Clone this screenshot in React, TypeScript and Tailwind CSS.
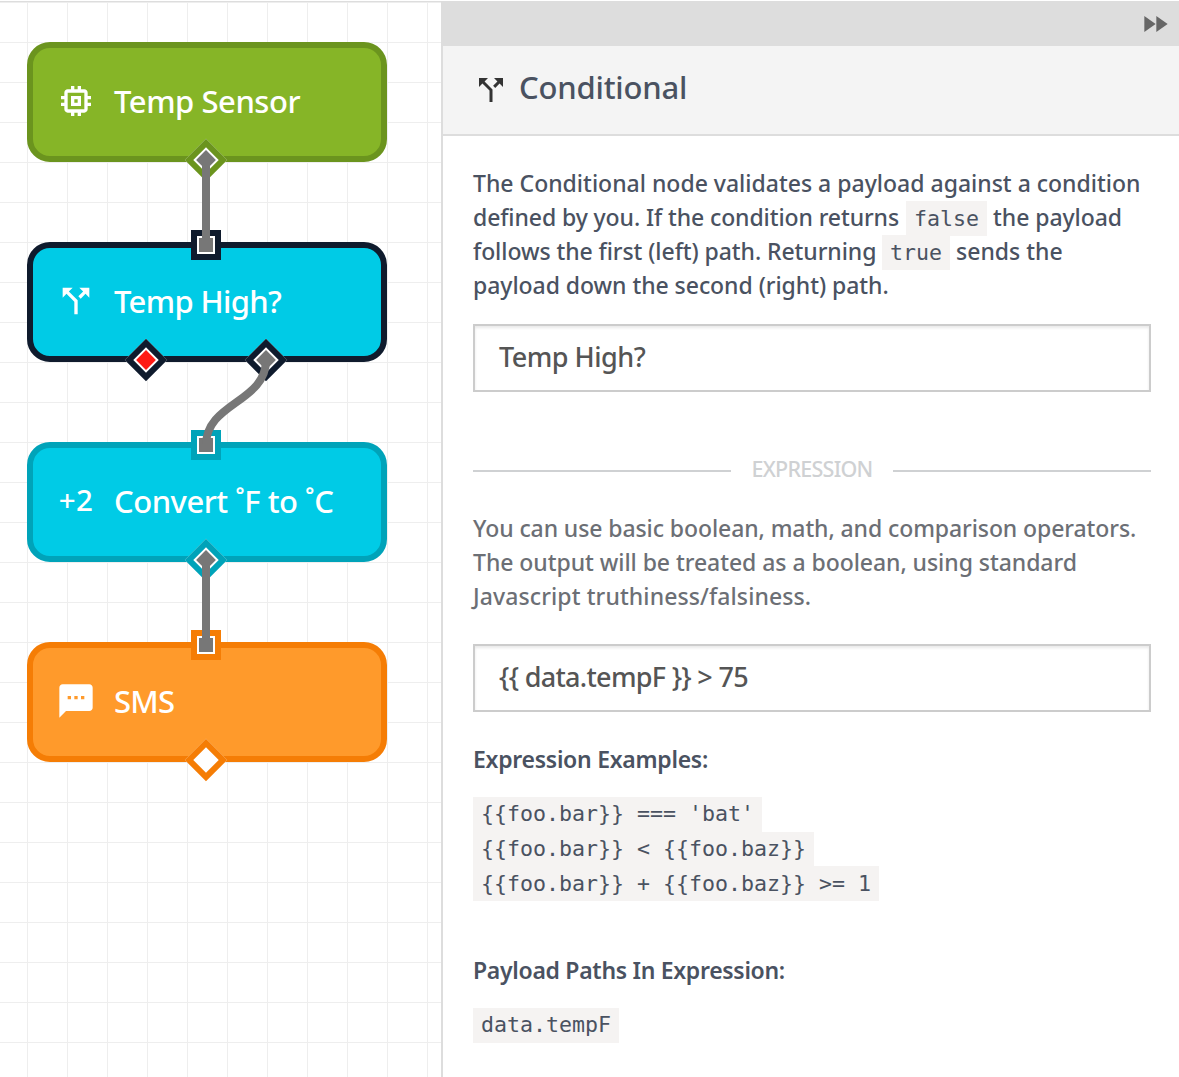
import type { ReactNode } from "react";
import { MdCallSplit, MdFastForward, MdMemory, MdSms } from "react-icons/md";

type NodeProps = {
  className: string;
  icon: ReactNode;
  label: string;
  labelClass: string;
};

function FlowNode({ className, icon, label, labelClass }: NodeProps) {
  return (
    <div
      className={`absolute left-[27px] flex h-[120px] w-[360px] items-center rounded-[23px] border-[6px] pb-[2px] pl-[23px] text-white ${className}`}
    >
      <div className="flex w-10 justify-center">{icon}</div>
      <span className={`ml-[18px] text-[31px] leading-10 font-medium whitespace-nowrap ${labelClass}`}>{label}</span>
    </div>
  );
}

/* Square input port on the top edge of a node. */
function InputPort({ className }: { className: string }) {
  return (
    <div className={`absolute left-[191px] size-[30px] border-[6px] bg-white p-[2px] ${className}`}>
      <div className="size-full bg-[#777777]" />
    </div>
  );
}

/* Diamond output port on the bottom edge of a node. */
function OutputPort({ className, fill }: { className: string; fill: string }) {
  return (
    <div className={`absolute size-[30px] rotate-45 border-[6px] bg-white p-[2px] ${className}`}>
      <div className={`size-full ${fill}`} />
    </div>
  );
}

function Canvas() {
  return (
    <div className="relative h-full w-[441px] shrink-0 overflow-hidden border-t border-[#dddddd] bg-white bg-[linear-gradient(to_right,#eeeeee_1px,transparent_1px),linear-gradient(to_bottom,#eeeeee_1px,transparent_1px)] bg-[size:40px_40px] bg-[position:27px_0px]">
      <div className="absolute inset-x-0 -top-[2px] h-[1079px]">
        <FlowNode
          className="top-[42px] border-[#6b941e] bg-[#86b527]"
          icon={<MdMemory size={40} />}
          label="Temp Sensor"
          labelClass="tracking-[-0.45px]"
        />
        <FlowNode
          className="top-[242px] border-[#0f1b2d] bg-[#00cbe6]"
          icon={<MdCallSplit size={40} />}
          label="Temp High?"
          labelClass="tracking-[-0.65px]"
        />
        <FlowNode
          className="top-[442px] border-[#00a3b9] bg-[#00cbe6]"
          icon={<span className="-mt-[2px] text-[29.5px] leading-10 font-medium tracking-[0.4px]">+2</span>}
          label="Convert ˚F to ˚C"
          labelClass="tracking-[-0.5px]"
        />
        <FlowNode
          className="top-[642px] border-[#f57d05] bg-[#ff9a2b]"
          icon={<MdSms size={40} />}
          label="SMS"
          labelClass="tracking-[-0.7px]"
        />

        <OutputPort className="top-[145px] left-[191px] border-[#6b941e]" fill="bg-[#777777]" />
        <InputPort className="top-[230px] border-[#0f1b2d]" />
        <OutputPort className="top-[345px] left-[131px] border-[#0f1b2d]" fill="bg-[#ff1a14]" />
        <OutputPort className="top-[345px] left-[251px] border-[#0f1b2d]" fill="bg-[#777777]" />
        <InputPort className="top-[430px] border-[#00a3b9]" />
        <OutputPort className="top-[545px] left-[191px] border-[#00a3b9]" fill="bg-[#777777]" />
        <InputPort className="top-[630px] border-[#f57d05]" />
        <OutputPort className="top-[745px] left-[191px] border-[#f57d05]" fill="bg-white" />

        <svg className="absolute inset-0" width="441" height="1077" fill="none" stroke="#777777" strokeWidth="8">
          <path d="M206 160V245" />
          <path d="M266 360C266 402.5 206 402.5 206 445" />
          <path d="M206 560V645" />
        </svg>
      </div>
    </div>
  );
}

function Code({ children, className = "" }: { children: ReactNode; className?: string }) {
  return (
    <code
      className={`flex h-[34.67px] w-fit items-center bg-[#f5f3f2] px-2 font-['DejaVu_Sans_Mono',monospace] text-[21.6px] leading-[34px] whitespace-pre text-[#4a5261] ${className}`}
    >
      {children}
    </code>
  );
}

function Field({ value, className = "" }: { value: string; className?: string }) {
  return (
    <div
      className={`flex h-[68px] items-center border-2 border-[#cccccc] bg-white px-6 pb-[2px] text-[27px] font-medium whitespace-pre text-[#555555] shadow-[inset_0_2px_3px_rgba(0,0,0,0.09)] ${className}`}
    >
      {value}
    </div>
  );
}

function Panel() {
  return (
    <div className="flex h-full flex-1 flex-col border-l-2 border-[#dddddd] bg-white">
      <div className="flex h-[45px] shrink-0 items-center justify-end bg-[#dddddd] pr-2">
        <MdFastForward size={32} className="text-[#666666]" />
      </div>
      <div className="flex h-[90px] shrink-0 items-center border-b-2 border-[#dddddd] bg-[#f4f4f4] pl-[30px]">
        <MdCallSplit size={36} className="text-[#333333]" />
        <h1 className="-mt-[7px] ml-[10px] text-[31px] leading-10 font-medium tracking-[-0.2px] text-[#4a5261]">
          Conditional
        </h1>
      </div>

      <div className="flex flex-col pr-7 pl-[30px]">
        <div className="mt-[30px] flex flex-col text-[23px] leading-[34px] font-medium whitespace-pre text-[#4a5261]">
          <div className="h-[34px] tracking-[0px]">The Conditional node validates a payload against a condition</div>
          <div className="flex h-[34px]">
            <span className="w-[433px] tracking-[-0.1px]">defined by you. If the condition returns</span>
            <Code className="mt-px pt-px">false</Code>
            <span className="ml-[6px] tracking-[-0.06px]">the payload</span>
          </div>
          <div className="flex h-[34px]">
            <span className="w-[409px] tracking-[-0.07px]">follows the first (left) path. Returning</span>
            <Code className="mt-px pt-px">true</Code>
            <span className="ml-[6px] tracking-[0px]">sends the</span>
          </div>
          <div className="h-[34px] tracking-[-0.05px]">payload down the second (right) path.</div>
        </div>

        <Field value="Temp High?" className="mt-[22px] tracking-[-0.5px]" />

        <div className="mt-[61px] flex h-[34px] items-center">
          <div className="mt-[2px] h-[2px] w-[258px] bg-[#cfd1d3]" />
          <span className="-mt-[2px] flex-1 text-center text-[21.5px] leading-[34px] font-medium tracking-[-0.75px] text-[#cfd1d3]">
            EXPRESSION
          </span>
          <div className="mt-[2px] h-[2px] w-[258px] bg-[#cfd1d3]" />
        </div>

        <div className="mt-6 flex flex-col text-[23px] leading-[34px] font-medium whitespace-pre text-[#6c6f75]">
          <span className="tracking-[-0.09px]">You can use basic boolean, math, and comparison operators.</span>
          <span className="tracking-[-0.05px]">The output will be treated as a boolean, using standard</span>
          <span className="tracking-[0.1px]">Javascript truthiness/falsiness.</span>
        </div>

        <Field value="{{ data.tempF }} > 75" className="mt-[31px] tracking-[-0.7px]" />

        <h2 className="mt-[30px] text-[23px] leading-[34px] font-semibold tracking-[-0.27px] text-[#4a5261]">
          Expression Examples:
        </h2>
        <div className="mt-[21px] flex flex-col">
          <Code>{"{{foo.bar}} === 'bat'"}</Code>
          <Code>{"{{foo.bar}} < {{foo.baz}}"}</Code>
          <Code>{"{{foo.bar}} + {{foo.baz}} >= 1"}</Code>
        </div>

        <h2 className="mt-[52px] text-[23px] leading-[34px] font-semibold tracking-[-0.3px] text-[#4a5261]">
          Payload Paths In Expression:
        </h2>
        <Code className="mt-[21px]">data.tempF</Code>
      </div>
    </div>
  );
}

export default function App() {
  return (
    <div className="flex h-[1077px] w-[1179px] overflow-hidden bg-white pt-px font-['Noto_Sans',sans-serif]">
      <Canvas />
      <Panel />
    </div>
  );
}
